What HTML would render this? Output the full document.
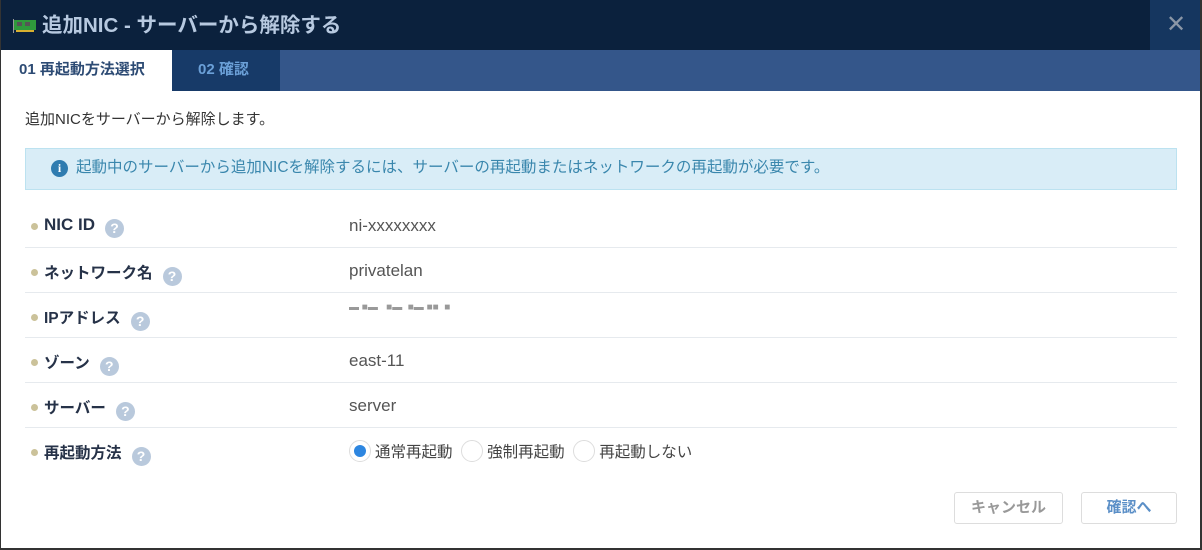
<!DOCTYPE html>
<html><head><meta charset="utf-8"><style>
*{margin:0;padding:0;box-sizing:border-box}
body{width:1202px;height:550px;overflow:hidden;background:#fff;font-family:"Liberation Sans","Noto Sans CJK JP",sans-serif;position:relative}
.frame{position:absolute;left:0;top:0;width:1202px;height:550px;border-left:1px solid #333;border-right:2px solid #333;border-bottom:2px solid #333}
.hdr{position:absolute;left:0;top:0;width:1202px;height:50px;background:#0b213d}
.hdr .t{position:absolute;left:42px;top:8px;font-size:20.5px;font-weight:bold;color:#b7c9e0}
.close{position:absolute;left:1150px;top:0;width:52px;height:50px;background:#15365f;color:#8a96a6;font-size:24px;text-align:center;line-height:50px}
.tabs{position:absolute;left:0;top:50px;width:1202px;height:41px;background:#34568a}
.tab{position:absolute;top:0;height:41px;line-height:40px;font-size:15px;font-weight:bold}
.t1{left:0;width:172px;background:#fff;color:#2d4b74;padding-left:19px}
.t2{left:172px;width:108px;background:#173a68;color:#6ba0d8;padding-left:26px}
.intro{position:absolute;left:25px;top:108px;font-size:15px;color:#333}
.info{position:absolute;left:25px;top:148px;width:1152px;height:42px;background:#d9edf7;border:1px solid #bce2f0;color:#3a87ad;font-size:15.5px;line-height:38px;padding-left:50px}
.info .i{position:absolute;left:25px;top:11px;width:17px;height:17px;border-radius:50%;background:#2f7cb0;color:#fff;font:bold 12px/17px "Liberation Serif",serif;text-align:center}
.row{position:absolute;left:25px;width:1152px;height:45px;border-bottom:1px solid #e6eaee}
.row .l{position:absolute;left:19px;top:13px;font-size:15.5px;font-weight:bold;color:#263248}
.row .l:before{content:"";position:absolute;left:-13px;top:8px;width:7px;height:7px;border-radius:50%;background:#cbc29a}
.q{display:inline-block;width:19px;height:19px;border-radius:50%;background:#b9c9dc;color:#fff;font-size:14px;line-height:19px;text-align:center;margin-left:10px;vertical-align:-3px}
.row .v{position:absolute;left:324px;top:13px;font-size:17px;color:#555}
.radio{display:inline-block;width:22px;height:22px;border-radius:50%;border:1px solid #ddd;vertical-align:-5px;margin-right:4px;position:relative}
.radio.on:after{content:"";position:absolute;left:4px;top:4px;width:12px;height:12px;border-radius:50%;background:#2d86e0}
.btn{position:absolute;top:492px;height:32px;border:1px solid #ddd;border-radius:3px;font-size:15px;font-weight:bold;text-align:center;line-height:30px}
</style></head><body>
<div class="hdr">
<svg style="position:absolute;left:13px;top:17px" width="24" height="16"><rect x="1" y="3" width="22" height="10" fill="#2f9a3c"/><rect x="4" y="5" width="5" height="4" fill="#555"/><rect x="12" y="5" width="5" height="4" fill="#555"/><rect x="0" y="2" width="1" height="14" fill="#999"/><rect x="3" y="13" width="18" height="2" fill="#d8b030"/></svg>
<div class="t">追加NIC - サーバーから解除する</div>
<div class="close">✕</div>
</div>
<div class="tabs"><div class="tab t1">01 再起動方法選択</div><div class="tab t2">02 確認</div></div>
<div class="intro">追加NICをサーバーから解除します。</div>
<div class="info"><span class="i">i</span>起動中のサーバーから追加NICを解除するには、サーバーの再起動またはネットワークの再起動が必要です。</div>
<div class="row" style="top:203px"><div class="l" style="font-size:17px;top:12px">NIC ID<span class="q">?</span></div><div class="v">ni-xxxxxxxx</div></div>
<div class="row" style="top:248px"><div class="l">ネットワーク名<span class="q">?</span></div><div class="v">privatelan</div></div>
<div class="row" style="top:293px"><div class="l">IPアドレス<span class="q">?</span></div><div class="v" style="top:9px;color:#999;font-size:10px">▬ ■▬ &nbsp; ■▬ &nbsp;■▬ ■■ &nbsp;■</div></div>
<div class="row" style="top:338px"><div class="l">ゾーン<span class="q">?</span></div><div class="v">east-11</div></div>
<div class="row" style="top:383px"><div class="l">サーバー<span class="q">?</span></div><div class="v">server</div></div>
<div class="row" style="top:428px;border:none"><div class="l">再起動方法<span class="q">?</span></div><div class="v" style="top:12px;font-size:15.5px;color:#444"><span class="radio on"></span>通常再起動 &nbsp;<span class="radio"></span>強制再起動 &nbsp;<span class="radio"></span>再起動しない</div></div>
<div class="btn" style="left:954px;width:109px;color:#999">キャンセル</div>
<div class="btn" style="left:1081px;width:96px;color:#5b8fc7">確認へ</div>
<div class="frame"></div>
</body></html>
